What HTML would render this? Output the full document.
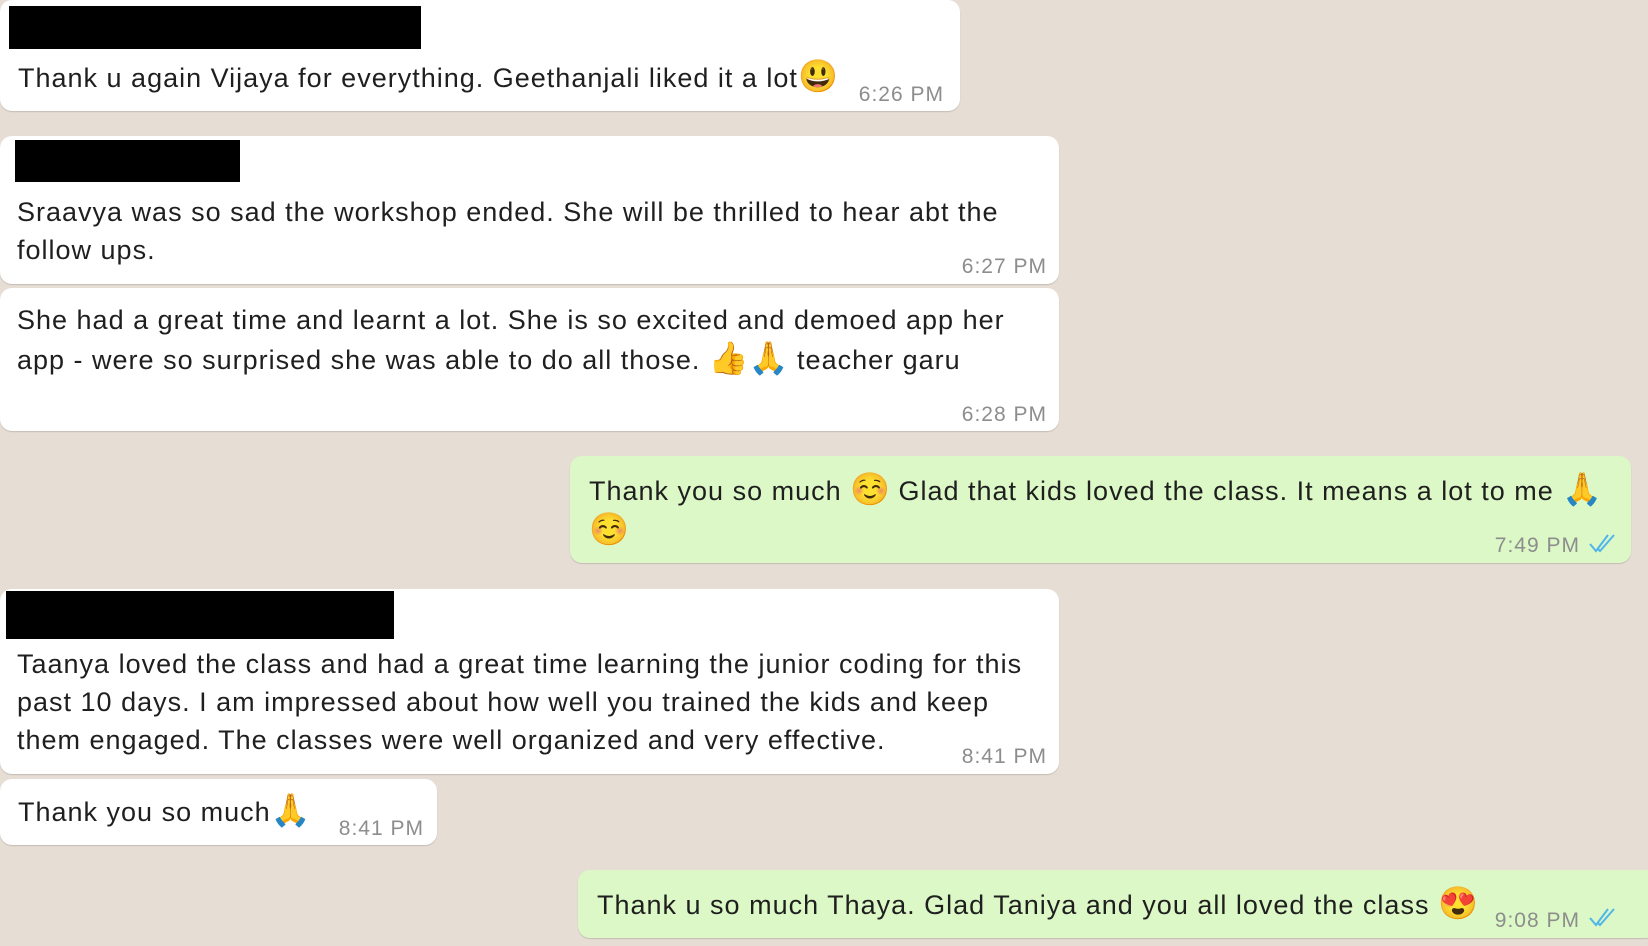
<!DOCTYPE html>
<html><head><meta charset="utf-8"><style>
body{margin:0;width:1648px;height:946px;overflow:hidden;background:#e6ddd4;font-family:"Liberation Sans",Arial,sans-serif;color:#1f1f1f;position:relative}
.b{position:absolute;background:#fff;border-radius:12px;box-shadow:0 1px 1px rgba(0,0,0,.15)}
.g{background:#dcf8c6}
.t{position:absolute;font-size:27px;letter-spacing:1px;white-space:nowrap;line-height:38px}
.tm{position:absolute;font-size:21px;letter-spacing:1px;color:#8d8d8d;white-space:nowrap;text-align:right;width:120px}
.k{position:absolute;background:#000}
.e{font-family:"Noto Color Emoji","DejaVu Sans",sans-serif;font-size:32px;letter-spacing:0}
</style></head><body>
<div class="b" style="left:0;top:0;width:960px;height:111px"></div>
<div class="k" style="left:9px;top:6px;width:412px;height:43px"></div>
<div class="t" style="left:18px;top:57px">Thank u again Vijaya for everything. Geethanjali liked it a lot<span class="e">😃</span></div>
<div class="tm" style="left:824px;top:83px">6:26 PM</div>

<div class="b" style="left:0;top:136px;width:1059px;height:148px"></div>
<div class="k" style="left:15px;top:140px;width:225px;height:42px"></div>
<div class="t" style="left:17px;top:193px">Sraavya was so sad the workshop ended. She will be thrilled to hear abt the<br>follow ups.</div>
<div class="tm" style="left:927px;top:255px">6:27 PM</div>

<div class="b" style="left:0;top:288px;width:1059px;height:143px"></div>
<div class="t" style="left:17px;top:301px">She had a great time and learnt a lot. She is so excited and demoed app her<br>app - were so surprised she was able to do all those. <span class="e">👍🙏</span> teacher garu</div>
<div class="tm" style="left:927px;top:403px">6:28 PM</div>

<div class="b g" style="left:570px;top:456px;width:1061px;height:107px"></div>
<div class="t" style="left:589px;top:470px">Thank you so much <span class="e">☺️</span> Glad that kids loved the class. It means a lot to me <span class="e">🙏</span><br><span class="e">☺️</span></div>
<div class="tm" style="left:1460px;top:534px">7:49 PM</div>
<svg style="position:absolute;left:1588px;top:532px" width="30" height="22" viewBox="0 0 30 22"><path d="M2 12l6 7L20 3M10 17l2 2L26 3" fill="none" stroke="#4fb6ec" stroke-width="2"/></svg>

<div class="b" style="left:0;top:589px;width:1059px;height:185px"></div>
<div class="k" style="left:6px;top:591px;width:388px;height:48px"></div>
<div class="t" style="left:17px;top:645px">Taanya loved the class and had a great time learning the junior coding for this<br>past 10 days. I am impressed about how well you trained the kids and keep<br>them engaged. The classes were well organized and very effective.</div>
<div class="tm" style="left:927px;top:745px">8:41 PM</div>

<div class="b" style="left:0;top:779px;width:437px;height:66px"></div>
<div class="t" style="left:18px;top:791px">Thank you so much<span class="e">🙏</span></div>
<div class="tm" style="left:304px;top:817px">8:41 PM</div>

<div class="b g" style="left:578px;top:870px;width:1080px;height:68px"></div>
<div class="t" style="left:597px;top:884px">Thank u so much Thaya. Glad Taniya and you all loved the class <span class="e">😍</span></div>
<div class="tm" style="left:1460px;top:909px">9:08 PM</div>
<svg style="position:absolute;left:1588px;top:906px" width="30" height="22" viewBox="0 0 30 22"><path d="M2 12l6 7L20 3M10 17l2 2L26 3" fill="none" stroke="#4fb6ec" stroke-width="2"/></svg>
</body></html>
